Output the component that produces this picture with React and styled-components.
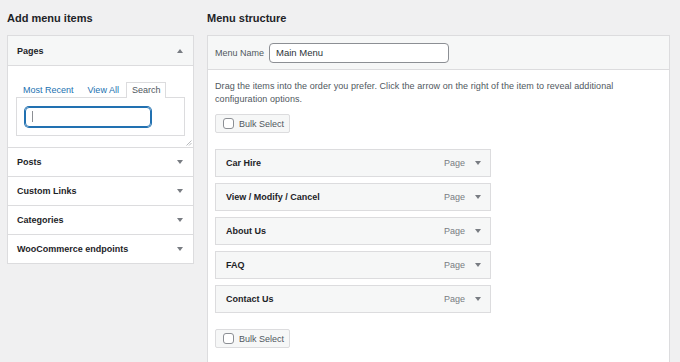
import React from 'react'
import styled, { createGlobalStyle } from 'styled-components'

const GlobalStyle = createGlobalStyle`
  body{
    margin:0;
    background:#f0f0f1;
    font-family:"Liberation Sans", Arial, sans-serif;
    color:#1d2327;
  }
`;

const Page = styled.div`
  display:flex;
  gap:13px;
  padding-left:7px;
  height:362px;
  overflow:hidden;
`;

const Column = styled.div`
  width:${p => p.$width}px;
  display:flex;
  flex-direction:column;
`;

const Heading = styled.h2`
  margin:0;
  height:35px;
  display:flex;
  align-items:center;
  font-size:11px;
  font-weight:700;
  color:#1d2327;
`;

const Panel = styled.div`
  background:#fff;
  border:1px solid #dcdcde;
  ${p => p.$open && 'border-bottom:none; flex:1;'}
`;

const SectionHead = styled.div`
  height:${p => p.$active ? 29 : 28}px;
  display:flex;
  align-items:center;
  justify-content:space-between;
  padding:0 10px 0 9px;
  font-size:9px;
  font-weight:700;
  background:${p => p.$active ? '#f6f7f7' : '#fff'};
  border-top:${p => p.$first ? 'none' : '1px solid #dcdcde'};
  border-bottom:${p => p.$active ? '1px solid #dcdcde' : 'none'};
`;

const Arrow = styled.span`
  width:0;
  height:0;
  border-left:3px solid transparent;
  border-right:3px solid transparent;
  ${p => p.$up
    ? 'border-bottom:4px solid #787c82;'
    : 'border-top:4px solid #787c82;'}
`;

const SectionBody = styled.div`
  padding:15px 8px 11px 8px;
  display:flex;
  flex-direction:column;
  position:relative;
`;

const Tabs = styled.div`
  display:flex;
  align-items:flex-end;
  height:16px;
`;

const Tab = styled.span`
  font-size:9px;
  line-height:15px;
  padding:0 ${p => p.$active ? 5 : 6}px;
  color:${p => p.$active ? '#50575e' : '#2271b1'};
  background:${p => p.$active ? '#fff' : 'transparent'};
  border:1px solid ${p => p.$active ? '#dcdcde' : 'transparent'};
  border-bottom:none;
  margin-bottom:-1px;
  position:relative;
  z-index:1;
`;

const TabPanel = styled.div`
  border:1px solid #dcdcde;
  height:37px;
  display:flex;
  align-items:center;
  padding-left:8px;
`;

const SearchField = styled.div`
  width:126px;
  height:20px;
  border:1px solid #2271b1;
  box-shadow:0 0 0 1px #2271b1;
  border-radius:4px;
  display:flex;
  align-items:center;
  padding-left:6px;
  box-sizing:border-box;
`;

const Caret = styled.span`
  width:1px;
  height:11px;
  background:#8c8f94;
`;

const Grip = styled.svg`
  position:absolute;
  right:1px;
  bottom:1px;
`;

const MenuHead = styled.div`
  height:33px;
  background:#f6f7f7;
  border-bottom:1px solid #dcdcde;
  display:flex;
  align-items:center;
  padding:0 7px;
  gap:5px;
`;

const Label = styled.label`
  font-size:9px;
  color:#50575e;
`;

const NameInput = styled.input`
  width:180px;
  height:20px;
  box-sizing:border-box;
  border:1px solid #8c8f94;
  border-radius:4px;
  padding:0 6px;
  font-family:inherit;
  font-size:9.5px;
  color:#2c3338;
  background:#fff;
  outline:none;
`;

const MenuBody = styled.div`
  padding:10px 7px 0 7px;
  display:flex;
  flex-direction:column;
  align-items:flex-start;
`;

const Description = styled.p`
  margin:0;
  font-size:9px;
  line-height:13px;
  letter-spacing:0.07px;
  color:#50575e;
  width:420px;
`;

const BulkButton = styled.div`
  margin-top:${p => p.$top}px;
  width:75px;
  height:19px;
  box-sizing:border-box;
  border:1px solid #dcdcde;
  background:#f6f7f7;
  border-radius:2px;
  display:flex;
  align-items:center;
  gap:5px;
  padding-left:7px;
  font-size:9px;
  color:#50575e;
`;

const Check = styled.span`
  width:11px;
  height:11px;
  box-sizing:border-box;
  border:1px solid #8c8f94;
  border-radius:3px;
  background:#fff;
`;

const ItemList = styled.div`
  margin-top:16px;
  display:flex;
  flex-direction:column;
  gap:6px;
`;

const Item = styled.div`
  width:276px;
  height:28px;
  box-sizing:border-box;
  border:1px solid #dcdcde;
  background:#f6f7f7;
  display:flex;
  align-items:center;
  padding:0 9px 0 10px;
  font-size:9px;
  font-weight:700;
  color:#1d2327;
`;

const ItemTitle = styled.span`
  flex:1;
`;

const ItemType = styled.span`
  font-weight:400;
  color:#787c82;
  margin-right:10px;
`;

const sections = ['Posts', 'Custom Links', 'Categories', 'WooCommerce endpoints'];
const items = ['Car Hire', 'View / Modify / Cancel', 'About Us', 'FAQ', 'Contact Us'];

export default function App() {
  return (
    <>
      <GlobalStyle />
      <Page>
        <Column $width={187}>
          <Heading>Add menu items</Heading>
          <Panel>
            <SectionHead $active $first>
              Pages
              <Arrow $up />
            </SectionHead>
            <SectionBody>
              <Tabs>
                <Tab>Most Recent</Tab>
                <Tab>View All</Tab>
                <Tab $active>Search</Tab>
              </Tabs>
              <TabPanel>
                <SearchField><Caret /></SearchField>
              </TabPanel>
              <Grip width="6" height="6" viewBox="0 0 6 6">
                <path d="M0.5 5.5 L5.5 0.5 M3 5.5 L5.5 3" stroke="#a7aaad" strokeWidth="0.8" />
              </Grip>
            </SectionBody>
            {sections.map(s => (
              <SectionHead key={s}>
                {s}
                <Arrow />
              </SectionHead>
            ))}
          </Panel>
        </Column>
        <Column $width={463}>
          <Heading>Menu structure</Heading>
          <Panel $open>
            <MenuHead>
              <Label>Menu Name</Label>
              <NameInput readOnly value="Main Menu" />
            </MenuHead>
            <MenuBody>
              <Description>
                Drag the items into the order you prefer. Click the arrow on the right of the item to reveal additional configuration options.
              </Description>
              <BulkButton $top={8}><Check />Bulk Select</BulkButton>
              <ItemList>
                {items.map(i => (
                  <Item key={i}>
                    <ItemTitle>{i}</ItemTitle>
                    <ItemType>Page</ItemType>
                    <Arrow />
                  </Item>
                ))}
              </ItemList>
              <BulkButton $top={16}><Check />Bulk Select</BulkButton>
            </MenuBody>
          </Panel>
        </Column>
      </Page>
    </>
  )
}
